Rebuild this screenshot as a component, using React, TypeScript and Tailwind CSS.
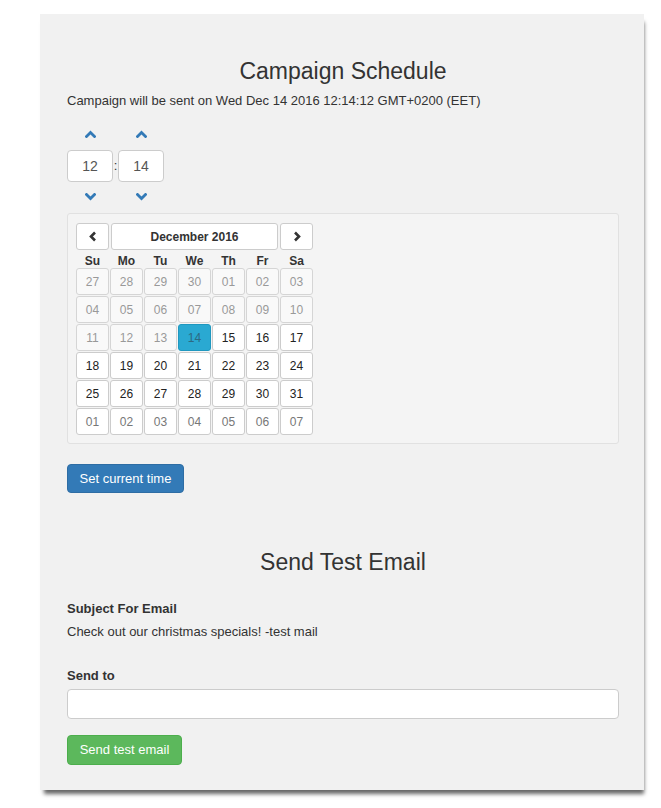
import React from 'react';

const font = { fontFamily: '"Liberation Sans", Arial, sans-serif' };

type Day = { label: string; kind: 'past' | 'current' | 'selected' | 'next' };

const buildDays = (): Day[] => {
  const days: Day[] = [];
  ['27', '28', '29', '30'].forEach((d) => days.push({ label: d, kind: 'past' }));
  for (let i = 1; i <= 31; i++) {
    const label = i < 10 ? `0${i}` : `${i}`;
    if (i < 14) days.push({ label, kind: 'past' });
    else if (i === 14) days.push({ label, kind: 'selected' });
    else days.push({ label, kind: 'current' });
  }
  for (let i = 1; i <= 7; i++) days.push({ label: `0${i}`, kind: 'next' });
  return days;
};

function Chevron({ up }: { up?: boolean }) {
  return (
    <svg width="11" height="8" viewBox="0 0 11 8" className="text-[#337ab7]">
      <polyline
        points={up ? '1.5,6.5 5.5,2.5 9.5,6.5' : '1.5,1.5 5.5,5.5 9.5,1.5'}
        fill="none"
        stroke="currentColor"
        strokeWidth="2.8"
        strokeLinecap="square"
      />
    </svg>
  );
}

function TimePicker() {
  return (
    <div className="mt-[12px] flex flex-col">
      <div className="flex h-[21px] items-center pt-[1px]">
        <div className="flex w-[46px] justify-center"><Chevron up /></div>
        <div className="w-[5px]" />
        <div className="flex w-[46px] justify-center"><Chevron up /></div>
      </div>
      <div className="mt-[6px] flex items-center">
        <div className="flex h-[32px] w-[46px] items-center justify-center rounded-[4px] border border-[#ccc] bg-white text-[14px] text-[#555]">12</div>
        <div className="flex w-[5px] justify-center text-[13px] text-[#333]">:</div>
        <div className="flex h-[32px] w-[46px] items-center justify-center rounded-[4px] border border-[#ccc] bg-white text-[14px] text-[#555]">14</div>
      </div>
      <div className="mt-[4px] flex h-[20px] items-center pt-[2px]">
        <div className="flex w-[46px] justify-center"><Chevron /></div>
        <div className="w-[5px]" />
        <div className="flex w-[46px] justify-center"><Chevron /></div>
      </div>
    </div>
  );
}

function Calendar() {
  const days = buildDays();
  const cellStyles: Record<Day['kind'], string> = {
    past: 'bg-[#f9f9f9] text-[#999] border-[#d5d5d5]',
    current: 'bg-white text-[#222] border-[#ccc]',
    selected: 'bg-[#2aa9d2] text-[#2c6a84] border-[#1f98c0]',
    next: 'bg-white text-[#777] border-[#ccc]',
  };
  return (
    <div className="mt-[7px] rounded-[3px] border border-[#e1e1e1] bg-[#f4f4f4] px-[8px] pb-[8px] pt-[9px]">
      <div className="grid w-[237px] grid-cols-[repeat(7,33px)] gap-x-[1px]">
        <div className="flex h-[27px] items-center justify-center rounded-[3px] border border-[#ccc] bg-white">
          <svg width="8" height="11" viewBox="0 0 8 11">
            <polyline points="6,1.5 2,5.5 6,9.5" fill="none" stroke="#333" strokeWidth="2.6" />
          </svg>
        </div>
        <div className="col-span-5 mx-[1px] flex h-[27px] items-center justify-center rounded-[3px] border border-[#ccc] bg-white text-[12px] font-bold text-[#333]">
          December 2016
        </div>
        <div className="flex h-[27px] items-center justify-center rounded-[3px] border border-[#ccc] bg-white">
          <svg width="8" height="11" viewBox="0 0 8 11">
            <polyline points="2,1.5 6,5.5 2,9.5" fill="none" stroke="#333" strokeWidth="2.6" />
          </svg>
        </div>
        {['Su', 'Mo', 'Tu', 'We', 'Th', 'Fr', 'Sa'].map((d) => (
          <div key={d} className="flex h-[18px] items-center justify-center pt-[3px] text-[12px] font-bold text-[#333]">
            {d}
          </div>
        ))}
      </div>
      <div className="grid w-[237px] grid-cols-[repeat(7,33px)] gap-[1px]">
        {days.map((d, i) => (
          <div
            key={i}
            className={`flex h-[27px] items-center justify-center rounded-[3px] border text-[12px] ${cellStyles[d.kind]}`}
          >
            {d.label}
          </div>
        ))}
      </div>
    </div>
  );
}

export default function App() {
  return (
    <div className="min-h-[808px] bg-white pt-[14px]" style={font}>
      <div className="ml-[40px] w-[604px] bg-[#f1f1f1] pb-[25px] pl-[27px] pr-[25px] pt-[42px] text-[#333] shadow-[2px_6px_4px_-2px_rgba(0,0,0,0.6)]">
        <h2 className="text-center text-[23px] leading-[30px]">Campaign Schedule</h2>
        <p className="mt-[5px] text-[13px] leading-[20px]">
          Campaign will be sent on Wed Dec 14 2016 12:14:12 GMT+0200 (EET)
        </p>

        <TimePicker />
        <Calendar />

        <button className="mt-[20px] h-[29px] w-[117px] rounded-[4px] border border-[#2e6da4] bg-[#337ab7] text-[13px] text-white">
          Set current time
        </button>

        <h2 className="mt-[54px] text-center text-[23px] leading-[30px]">Send Test Email</h2>

        <div className="mt-[22px] text-[13px] font-bold leading-[20px]">Subject For Email</div>
        <div className="mt-[3px] text-[13px] leading-[20px]">Check out our christmas specials! -test mail</div>

        <div className="mt-[24px] text-[13px] font-bold leading-[20px]">Send to</div>
        <input
          type="text"
          className="mt-[3px] block h-[30px] w-full rounded-[4px] border border-[#ccc] bg-white px-3 text-[13px] outline-none"
        />

        <button className="mt-[16px] h-[30px] w-[115px] rounded-[4px] border border-[#4cae4c] bg-[#5cb85c] text-[13px] text-white">
          Send test email
        </button>
      </div>
    </div>
  );
}
